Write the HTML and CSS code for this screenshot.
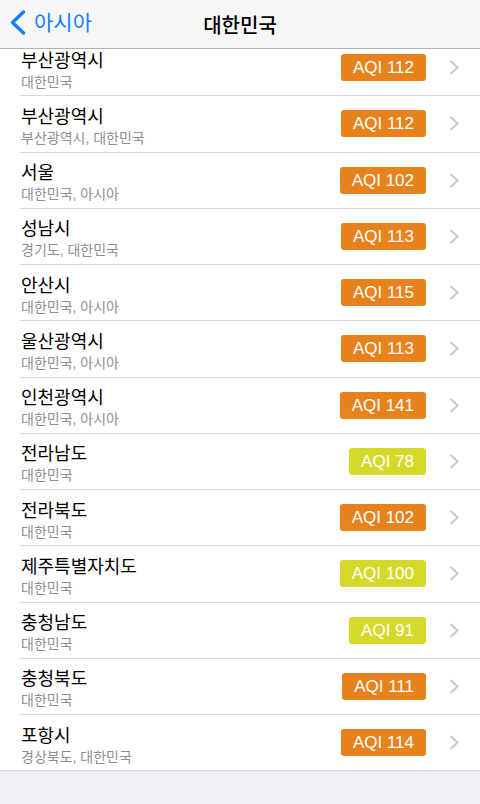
FILE: index.html
```html
<!DOCTYPE html>
<html lang="ko">
<head>
    <meta charset="utf-8">
    <title>대한민국</title>
    <link rel="stylesheet" href="styles.css">
</head>
<body>
    <div class="navbar">
        <a class="back">
            <svg width="18" height="25" viewBox="0 0 18 25"><path d="M14.5 2 L3.5 12.5 L14.5 23" fill="none" stroke="#157efb" stroke-width="3.4" stroke-linecap="round" stroke-linejoin="round"/></svg>
            <span>아시아</span>
        </a>
        <div class="title">대한민국</div>
    </div>

    <div class="content">
        <ul class="list" id="list"></ul>
    </div>

<script>
    var cities = [
        ["부산광역시", "대한민국", 112],
        ["부산광역시", "부산광역시, 대한민국", 112],
        ["서울", "대한민국, 아시아", 102],
        ["성남시", "경기도, 대한민국", 113],
        ["안산시", "대한민국, 아시아", 115],
        ["울산광역시", "대한민국, 아시아", 113],
        ["인천광역시", "대한민국, 아시아", 141],
        ["전라남도", "대한민국", 78],
        ["전라북도", "대한민국", 102],
        ["제주특별자치도", "대한민국", 100],
        ["충청남도", "대한민국", 91],
        ["충청북도", "대한민국", 111],
        ["포항시", "경상북도, 대한민국", 114]
    ];

    var list = document.getElementById("list");
    cities.forEach(function (c) {
        var li = document.createElement("li");
        li.className = "row";
        var level = c[2] > 100 ? "bad" : "moderate";
        li.innerHTML =
            '<div class="names"><div class="city">' + c[0] + '</div><div class="region">' + c[1] + '</div></div>' +
            '<span class="aqi ' + level + '">AQI ' + c[2] + '</span>' +
            '<svg class="chevron" width="10" height="15" viewBox="0 0 10 15"><path d="M1.5 1 L8.5 7.5 L1.5 14" fill="none" stroke="#c7c7cc" stroke-width="2"/></svg>';
        list.appendChild(li);
    });
</script>
</body>
</html>
```

FILE: styles.css
```css
body {
    margin: 0;
    background: #efeff4;
    font-family: "Liberation Sans", "Noto Sans CJK KR", sans-serif;
}

.navbar {
    height: 48px;
    background: #f7f7f7;
    border-bottom: 1px solid #b2b2b2;
    display: flex;
    align-items: center;
    justify-content: center;
    position: relative;
    z-index: 1;
}

.back {
    position: absolute;
    left: 9px;
    top: 10px;
    display: flex;
    align-items: center;
    gap: 7px;
    color: #157efb;
    font-size: 21px;
}

.back span {
    line-height: 24px;
}

.title {
    font-size: 20px;
    font-weight: 500;
    color: #000;
    font-family: "Noto Sans CJK KR", sans-serif;
}

.content {
    overflow: hidden;
}

.list {
    list-style: none;
    margin: -9px 0 0 0;
    padding: 0;
    background: #fff;
}

.row {
    height: 55.25px;
    margin-bottom: 1px;
    display: flex;
    align-items: center;
    padding: 0 21px;
    position: relative;
}

.row::after {
    content: "";
    position: absolute;
    left: 20px;
    right: 0;
    bottom: -1px;
    border-bottom: 1px solid #d8d8dc;
}

.row:last-child::after {
    left: 0;
}

.names {
    flex: 1;
    padding-top: 6px;
}

.city {
    font-size: 18px;
    line-height: 22px;
    color: #000;
}

.region {
    font-size: 14px;
    line-height: 20px;
    color: #8e8e93;
}

.aqi {
    font-size: 17px;
    color: #fff;
    height: 27px;
    line-height: 27px;
    padding: 0 12px;
    border-radius: 3px;
    margin-right: 23px;
}

.aqi.bad {
    background: #e8821c;
}

.aqi.moderate {
    background: #d6d92a;
}

.chevron {
    display: block;
}
```
